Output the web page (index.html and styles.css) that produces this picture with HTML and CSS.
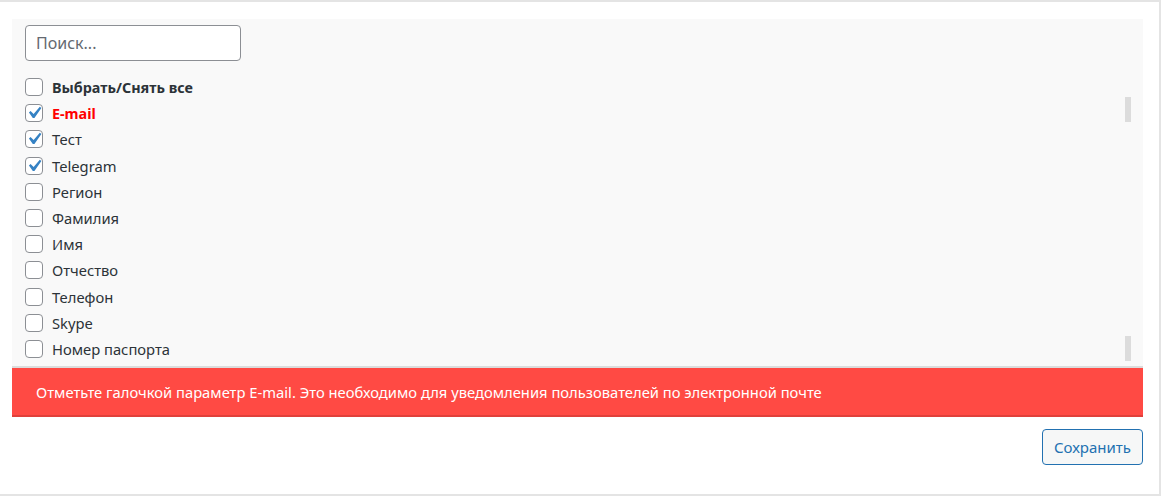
FILE: index.html
```html
<!DOCTYPE html>
<html lang="ru">
<head>
  <meta charset="utf-8">
  <title>Поля уведомлений</title>
  <link rel="stylesheet" href="styles.css">
</head>
<body>
  <div class="card">
    <div class="panel">
      <input type="text" class="search" placeholder="Поиск...">
      <div class="list">
        <label class="row all"><span class="box"></span>Выбрать/Снять все</label>
        <label class="row required"><span class="box checked"><svg viewBox="0 0 20 20"><path d="M14.83 4.89l1.34.94-5.81 8.38H9.02L5.78 9.67l1.34-1.25 2.57 2.4z"/></svg></span>E-mail</label>
        <label class="row"><span class="box checked"><svg viewBox="0 0 20 20"><path d="M14.83 4.89l1.34.94-5.81 8.38H9.02L5.78 9.67l1.34-1.25 2.57 2.4z"/></svg></span>Тест</label>
        <label class="row"><span class="box checked"><svg viewBox="0 0 20 20"><path d="M14.83 4.89l1.34.94-5.81 8.38H9.02L5.78 9.67l1.34-1.25 2.57 2.4z"/></svg></span>Telegram</label>
        <label class="row"><span class="box"></span>Регион</label>
        <label class="row"><span class="box"></span>Фамилия</label>
        <label class="row"><span class="box"></span>Имя</label>
        <label class="row"><span class="box"></span>Отчество</label>
        <label class="row"><span class="box"></span>Телефон</label>
        <label class="row"><span class="box"></span>Skype</label>
        <label class="row"><span class="box"></span>Номер паспорта</label>
        <!-- scroll markers drawn over the list -->
        <span class="thumb thumb-top"></span>
        <span class="thumb thumb-bottom"></span>
      </div>
    </div>
    <div class="notice">Отметьте галочкой параметр E-mail. Это необходимо для уведомления пользователей по электронной почте</div>
    <div class="actions">
      <button class="save">Сохранить</button>
    </div>
  </div>
</body>
</html>
```

FILE: styles.css
```css
body {
  margin: 0;
  font-family: "Noto Sans", "Open Sans", sans-serif;
  font-size: 14.75px;
  color: #2c3338;
  background-color: #fff;
}
.card {
  width: 1131px;
  padding: 17px 16px 29px 12px;
  border: 2px solid #e4e4e4;
  border-left: none;
  background-color: #fff;
}
.panel {
  background-color: #f9f9f9;
  padding: 6px 13px 4px 13px;
  border-bottom: 2px solid #dcdcdc;
}
.search {
  display: block;
  box-sizing: border-box;
  width: 216px;
  height: 36px;
  margin: 0 0 13px 0;
  padding: 0 10px;
  border: 1px solid #8c8f94;
  border-radius: 4px;
  font-family: inherit;
  font-size: 16px;
  color: #2c3338;
  background-color: #fff;
}
.search::placeholder {
  color: #646970;
}
.list {
  position: relative;
}
.row {
  display: flex;
  align-items: center;
  height: 26.2px;
}
.row.all {
  font-weight: bold;
  font-size: 14.35px;
}
.row.required {
  font-weight: bold;
  font-size: 14.35px;
  color: #ff0000;
}
.box {
  box-sizing: border-box;
  width: 18px;
  height: 18px;
  margin-right: 9px;
  border: 1px solid #8c8f94;
  border-radius: 4px;
  background-color: #fff;
  display: flex;
  align-items: center;
  justify-content: center;
  overflow: visible;
}
.box svg {
  width: 24px;
  height: 24px;
  flex: none;
  fill: #3582c4;
}
.thumb {
  position: absolute;
  right: -1px;
  width: 6px;
  height: 25px;
  background-color: #dcdcdc;
}
.thumb-top {
  top: 23px;
}
.thumb-bottom {
  top: 262px;
}
.notice {
  background-color: #ff4a44;
  border-bottom: 2px solid #e0403a;
  color: #fff;
  padding: 0 24px;
  height: 47px;
  display: flex;
  align-items: center;
}
.actions {
  display: flex;
  justify-content: flex-end;
  margin-top: 12px;
}
.save {
  box-sizing: border-box;
  width: 101px;
  height: 36px;
  border: 1px solid #2271b1;
  border-radius: 4px;
  background-color: #f6f7f7;
  color: #2271b1;
  font-family: inherit;
  font-size: 15px;
  cursor: pointer;
}
```
